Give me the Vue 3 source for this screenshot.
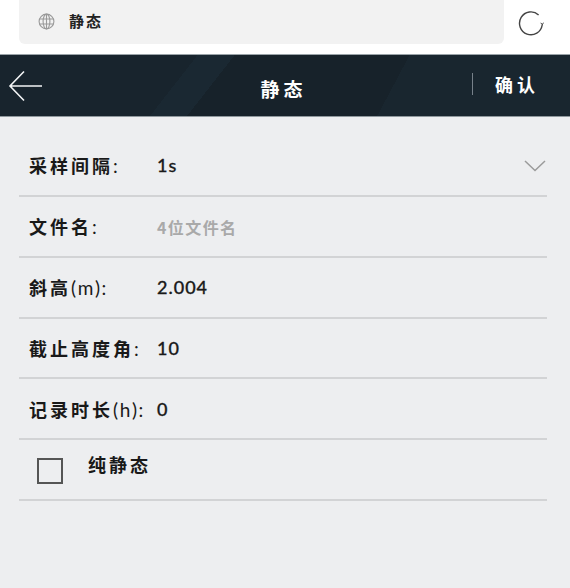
<template>
  <div class="page">
    <div class="topbar">
      <div class="urlbox">
        <svg class="globe" width="17" height="17" viewBox="0 0 17 17" fill="none" stroke="#9a9a9a" stroke-width="1.1">
          <circle cx="8.5" cy="8.5" r="7.4" />
          <ellipse cx="8.5" cy="8.5" rx="3.4" ry="7.4" />
          <path d="M1.6 6h13.8M1.6 11h13.8M8.5 1.1v14.8" />
        </svg>
        <span class="urltext">静态</span>
      </div>
      <svg class="reload" width="26" height="26" viewBox="0 0 26 26" fill="none" stroke="#444" stroke-width="1.4">
        <path d="M20.6 4.9A11.4 11.4 0 1 0 24.2 15" />
        <path d="M22.8 12.8l1.5 2.1 1.1-2.2" stroke-width="1" />
      </svg>
    </div>

    <header class="head">
      <svg class="back" width="36" height="32" viewBox="0 0 36 32" fill="none" stroke="#f2f4f5" stroke-width="1.6">
        <path d="M34 16H2M16 1.5 2 16l14 14.5" />
      </svg>
      <div class="title">静态</div>
      <div class="confirm">确认</div>
    </header>

    <main class="form">
      <div v-for="row in rows" :key="row.label" class="row">
        <span class="label">{{ row.label }}<span class="unit">{{ row.unit }}</span></span>
        <span class="value" :class="{ hint: row.hint }">{{ row.value }}</span>
        <svg v-if="row.select" class="chevron" width="24" height="14" viewBox="0 0 24 14" fill="none" stroke="#9b9b9b" stroke-width="1.5">
          <path d="M2 2l10 9.5L22 2" />
        </svg>
      </div>
      <div class="row check-row">
        <span class="box"></span>
        <span class="check-label">纯静态</span>
      </div>
    </main>
  </div>
</template>

<script setup>
const rows = [
  { label: '采样间隔', unit: ':', value: '1s', select: true },
  { label: '文件名', unit: ':', value: '4位文件名', hint: true },
  { label: '斜高', unit: '(m):', value: '2.004' },
  { label: '截止高度角', unit: ':', value: '10' },
  { label: '记录时长', unit: '(h):', value: '0' },
]
</script>

<style>
html, body {
  margin: 0;
  background: #edeef0;
}
</style>

<style scoped>
.page {
  width: 570px;
  height: 588px;
  overflow: hidden;
  font-family: "Noto Sans CJK SC", "Lato", sans-serif;
  background: #edeef0;
}
.topbar {
  height: 54px;
  background: #fff;
  display: flex;
  align-items: flex-start;
  padding-left: 19px;
  box-sizing: border-box;
}
.urlbox {
  width: 485px;
  height: 44px;
  background: #f2f2f2;
  border-radius: 0 0 6px 6px;
  display: flex;
  align-items: center;
  padding-left: 19px;
  box-sizing: border-box;
}
.globe {
  margin-top: -1px;
}
.urltext {
  margin-left: 14px;
  margin-top: -4px;
  font-size: 15px;
  font-weight: 700;
  color: #222;
  letter-spacing: 2px;
}
.reload {
  margin: 10px 0 0 14px;
}
.head {
  height: 63px;
  display: flex;
  align-items: center;
  color: #fff;
  box-sizing: border-box;
  border-top: 1px solid #9aa3a8;
  border-bottom: 1px solid #8f989d;
  background-color: #18242d;
  background-image:
    linear-gradient(118deg, transparent 0 68%, #19262f 68% 100%),
    linear-gradient(128deg, #18242d 0 32%, #1a2832 32% 38%, #17222a 38% 100%);
}
.back {
  margin-left: 8px;
  flex: none;
}
.title {
  flex: 1;
  text-align: center;
  font-size: 19px;
  font-weight: 700;
  letter-spacing: 4px;
  padding-left: 51px;
  margin-top: 6px;
}
.confirm {
  width: 98px;
  height: 22px;
  line-height: 22px;
  box-sizing: border-box;
  border-left: 1px solid #77818a;
  padding-left: 22px;
  margin-bottom: 4px;
  font-size: 18px;
  font-weight: 700;
  letter-spacing: 4px;
  white-space: nowrap;
}
.form {
  padding: 19px 23px 0 19px;
}
.row {
  height: 60.85px;
  box-sizing: border-box;
  display: flex;
  align-items: center;
  padding-left: 10px;
  border-bottom: 2px solid #d2d3d5;
}
.label {
  width: 128px;
  flex: none;
  font-size: 18px;
  font-weight: 700;
  color: #191919;
  letter-spacing: 3px;
  white-space: nowrap;
}
.unit {
  font-family: "Lato", sans-serif;
  font-size: 19px;
  font-weight: 400;
  letter-spacing: 1.6px;
}
.value {
  font-family: "Lato", "Noto Sans CJK SC", sans-serif;
  font-size: 18px;
  font-weight: 500;
  color: #1a1a1a;
  letter-spacing: 1px;
  -webkit-text-stroke: 0.3px #1a1a1a;
}
.value.hint {
  font-family: "Noto Sans CJK SC", sans-serif;
  font-size: 16px;
  font-weight: 700;
  color: #a9a9a9;
  letter-spacing: 1.4px;
  -webkit-text-stroke: 0;
  margin-top: 2px;
}
.chevron {
  margin-left: auto;
  margin-top: 1px;
}
.check-row {
  padding-left: 18px;
}
.box {
  width: 22px;
  height: 22px;
  border: 2px solid #555;
  margin-top: 2px;
}
.check-label {
  margin-left: 25px;
  margin-bottom: 12px;
  font-size: 18px;
  font-weight: 700;
  color: #191919;
  letter-spacing: 3px;
}
</style>
